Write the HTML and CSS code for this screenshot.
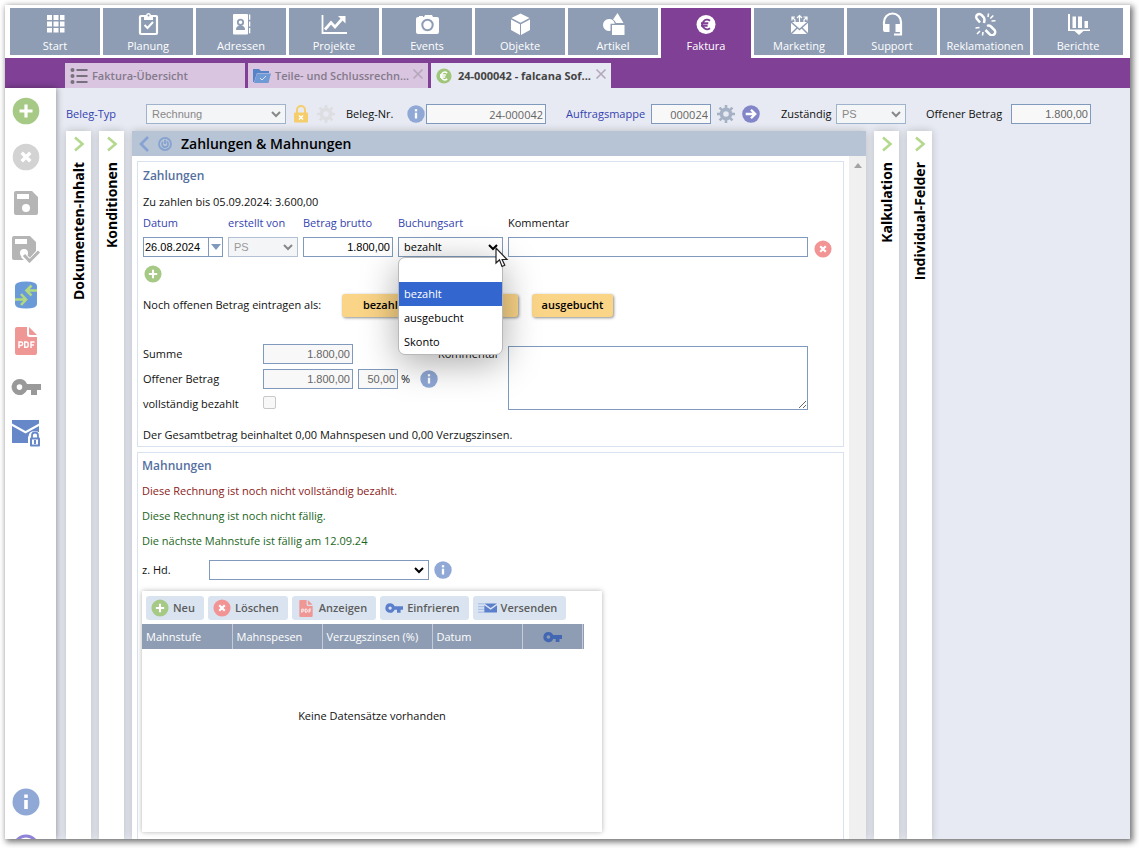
FILE: index.html
```
<!DOCTYPE html>
<html lang="de">
<head>
<meta charset="utf-8">
<title>Faktura</title>
<link rel="stylesheet" href="styles.css">
</head>
<body>
<svg class="symbols" aria-hidden="true">
  <symbol id="plus" viewBox="0 0 28 28"><circle cx="14" cy="14" r="13.3" fill="#a6ca86"/><path d="M14 7.5v13M7.5 14h13" stroke="#fff" stroke-width="3.2"/></symbol>
  <symbol id="cross" viewBox="0 0 28 28"><circle cx="14" cy="14" r="13.3" fill="currentColor"/><path d="M9.7 9.7l8.6 8.6M18.3 9.7l-8.6 8.6" stroke="#fff" stroke-width="3.4"/></symbol>
  <symbol id="info" viewBox="0 0 28 28"><circle cx="14" cy="14" r="13.5" fill="#8fa8d5"/><path d="M14 12v9" stroke="#fff" stroke-width="3.6"/><path d="M14 6.5v3.4" stroke="#fff" stroke-width="3.6"/></symbol>
  <symbol id="key" viewBox="0 0 30 18"><path fill="currentColor" fill-rule="evenodd" d="M8.500 1a8 8 0 1 0 7.500 11h4v5h6v-5h4V6H16a8 8 0 0 0-7.500-5zm0 5.300a2.800 2.800 0 1 1 0 5.600 2.800 2.800 0 0 1 0-5.600z"/></symbol>
  <symbol id="gear" viewBox="0 0 18 18"><circle cx="9" cy="9" r="4.600" fill="none" stroke="currentColor" stroke-width="3.600"/><path stroke="currentColor" stroke-width="2.600" d="M9 0v3.500M9 14.500V18M0 9h3.500M14.500 9H18M2.600 2.600l2.500 2.500M12.900 12.900l2.500 2.500M15.400 2.600l-2.500 2.500M5.100 12.900l-2.500 2.500"/></symbol>
  <symbol id="euro" viewBox="0 0 20 20"><circle cx="10" cy="10" r="9.500" fill="currentColor"/><path d="M14 6.300A4.700 4.700 0 1 0 14 13.700M5 8.800h7.300M5 11.300h6.600" fill="none" stroke="var(--mark)" stroke-width="1.900"/></symbol>
  <symbol id="pdf" viewBox="0 0 22 28"><path fill="#ee9795" d="M2 0h10v7.500q0 2.500 2.500 2.500H22v16a2 2 0 0 1-2 2H2a2 2 0 0 1-2-2V2a2 2 0 0 1 2-2zM14 0l8 8h-6.500Q14 8 14 6.500z"/><path d="M4 21v-6h2a1.700 1.700 0 0 1 0 3.500H4M9.700 20.200v-5.200h1.500a2 2 0 0 1 2 2v1.200a2 2 0 0 1-2 2zM16 21v-6h3.500M16 18h3" fill="none" stroke="#fff" stroke-width="1.400"/></symbol>
  <symbol id="disk" viewBox="0 0 24 24"><path fill="#b5b5b5" fill-rule="evenodd" d="M2 0h16l6 6v16a2 2 0 0 1-2 2H2a2 2 0 0 1-2-2V2a2 2 0 0 1 2-2zM3 3v5h12V3zM12 13a4 4 0 1 0 0 8 4 4 0 0 0 0-8z"/></symbol>
  <symbol id="chev" viewBox="0 0 12 16"><path d="M2 1.500l7.500 6.500L2 14.500" fill="none" stroke="currentColor" stroke-width="2.600"/></symbol>
  <symbol id="close" viewBox="0 0 12 12"><path d="M1.500 1.500l9 9M10.500 1.500l-9 9" stroke="currentColor" stroke-width="1.600"/></symbol>
</svg>

<div class="app">
  <nav class="modules">
    <a class="module" href="#"><svg viewBox="0 0 24 24"><path fill="#fff" d="M4 3h5v5H4zM10.500 3h5v5h-5zM17 3h4.500v5H17zM4 9.500h5v5H4zM10.500 9.500h5v5h-5zM17 9.500h4.500v5H17zM4 16h5v4.500H4zM10.500 16h5v4.500h-5zM17 16h4.500v4.500H17z"/></svg><span>Start</span></a>
    <a class="module" href="#"><svg viewBox="0 0 24 24"><rect x="4" y="4" width="17" height="18" rx="1" fill="none" stroke="#fff" stroke-width="2.200"/><path fill="#fff" d="M8 8V3h2a2.600 2.600 0 0 1 5 0h2v5z"/><circle cx="12.500" cy="3.500" r="1" fill="#8e9db3"/><path d="M8.500 13l3 3 5.500-6" fill="none" stroke="#fff" stroke-width="2"/></svg><span>Planung</span></a>
    <a class="module" href="#"><svg viewBox="0 0 24 24"><rect x="4" y="2" width="15" height="20.500" rx="1" fill="#fff"/><path fill="#fff" d="M20 2.500h1.300v5.300H20zM20 9.500h1.300v5H20zM20 16h1.300v5.300H20z"/><circle cx="11.500" cy="10.300" r="2.700" fill="#fff" stroke="#8e9db3" stroke-width="1.800"/><path fill="#8e9db3" d="M7 18q0-4 3-4.300h3q3 .3 3 4.300z"/></svg><span>Adressen</span></a>
    <a class="module" href="#"><svg class="wide" viewBox="0 0 26 24"><path d="M1.500 3v18H26" fill="none" stroke="#fff" stroke-width="1.800"/><path d="M4 17.500l6-7 4 4.500 8-9" fill="none" stroke="#fff" stroke-width="2.700"/><path fill="#fff" d="M17 4h7.500v7.500z"/></svg><span>Projekte</span></a>
    <a class="module" href="#"><svg viewBox="0 0 24 24"><path fill="#fff" d="M1 7q0-2 2-2h1V4h4v1h1l1-2h7l1 2h4q2 0 2 2v13q0 2-2 2H3q-2 0-2-2z"/><circle cx="12.500" cy="13" r="5.200" fill="none" stroke="#8e9db3" stroke-width="2"/></svg><span>Events</span></a>
    <a class="module" href="#"><svg viewBox="0 0 24 24"><path fill="#fff" d="M12.500 1.500l9 4.500-9 4.700L3.500 6zM3 7.500l9 4.700V23l-9-5zM22 7.500l-9 4.700V23l9-5z"/></svg><span>Objekte</span></a>
    <a class="module" href="#"><svg viewBox="0 0 24 24"><path fill="#fff" d="M16.500 1l6 10H15a6 6 0 0 0-3-3.500z"/><path fill="#fff" d="M8 7a6 6 0 0 1 5.800 4.800H9.500v7A6 6 0 1 1 8 7z"/><path fill="#fff" d="M11 13h12.500v10H11z"/></svg><span>Artikel</span></a>
    <a class="module module-active" href="#"><svg viewBox="0 0 24 24"><use href="#euro" x="2" y="2.500" width="20" height="20"/></svg><span>Faktura</span></a>
    <a class="module" href="#"><svg viewBox="0 0 24 24"><path fill="#fff" d="M4 10h17v12H4z"/><path d="M4 10l8.500 7.500L21 10M4 22l6.500-6.500M21 22l-6.500-6.500" fill="none" stroke="#8e9db3" stroke-width="1.500"/><path d="M12.500 13V4M10 6l2.500-2.500L15 6M8 11V8L5 5M5 8.500V5h3M17 11V8l3-3M16.500 5H20v3.500" fill="none" stroke="#fff" stroke-width="1.200"/></svg><span>Marketing</span></a>
    <a class="module" href="#"><svg viewBox="0 0 24 24"><path d="M4 13v-3a8.500 8.500 0 0 1 17 0v12.500h-7" fill="none" stroke="#fff" stroke-width="2.200"/><path fill="#fff" d="M3 12h6.500v8H5q-2 0-2-2zM15.500 12H22v8h-6.500z"/></svg><span>Support</span></a>
    <a class="module" href="#"><svg viewBox="0 0 24 24"><path d="M11 11l.5-3a5 5 0 0 0-1-3L8.500 3a3 3 0 0 0-4.500 4L7 10.500M12.500 18l4 4a3.200 3.200 0 0 0 5-4L18 14.500q-2-1.500-4-.5" fill="none" stroke="#fff" stroke-width="2.500"/><path d="M15 5l.5-3.500M17.300 6.500l3-3M18.500 9l4-.3M2.500 16l4-.5M4 22l3-3M9.500 23.500l.5-3.500" stroke="#fff" stroke-width="1.600"/></svg><span>Reklamationen</span></a>
    <a class="module" href="#"><svg viewBox="0 0 24 24"><path fill="#fff" d="M2 2h2v15.500h20V19h-6.500L13 23l-4.500-4H2zM6.500 4.500H10V16H6.500zM12 4.500h4V16h-4zM18.500 9H22v7h-3.500z"/></svg><span>Berichte</span></a>
  </nav>

  <div class="tabs">
    <a class="tab" href="#"><svg width="18" height="18" viewBox="0 0 18 18"><g fill="#77717d"><circle cx="2.500" cy="3" r="2"/><circle cx="2.500" cy="9" r="2"/><circle cx="2.500" cy="15" r="2"/><path d="M6.500 2h11v2h-11zM6.500 8h11v2h-11zM6.500 14h11v2h-11z"/></g></svg><span>Faktura-Übersicht</span></a>
    <a class="tab" href="#"><svg width="18" height="18" viewBox="0 0 18 18"><path fill="#5484c8" d="M0 2h6l2 2h8v2H4L1 15H0z"/><path fill="#6f9ad6" d="M4 6.500h14L15.500 16H1z"/><path d="M7 11l2 2 4-4" fill="none" stroke="#dce4f4"/></svg><span>Teile- und Schlussrechn...</span><svg class="tab-close" width="12" height="12"><use href="#close"/></svg></a>
    <a class="tab tab-active" href="#"><svg class="tab-euro" width="16" height="16"><use href="#euro"/></svg><span>24-000042 - falcana Sof...</span><svg class="tab-close" width="12" height="12"><use href="#close"/></svg></a>
  </div>

  <div class="body">
    <aside class="side">
      <button aria-label="Neu"><svg width="28" height="28"><use href="#plus"/></svg></button>
      <button class="c-light" aria-label="Abbrechen"><svg width="28" height="28"><use href="#cross"/></svg></button>
      <button aria-label="Speichern"><svg width="24" height="24"><use href="#disk"/></svg></button>
      <button aria-label="Speichern und schließen"><svg width="28" height="28" viewBox="0 0 28 28"><use href="#disk" x="0" y="1" width="24" height="24"/><path d="M11 20l7 7 10-11" fill="none" stroke="#fff" stroke-width="6"/><path d="M12 20l5.500 6L27 16.500" fill="none" stroke="#b5b5b5" stroke-width="3"/></svg></button>
      <button aria-label="Abgleich"><svg width="24" height="28" viewBox="0 0 24 28"><path fill="#6b9ad8" d="M1 5q0-4.500 11-4.500T23 5v18q0 4.500-11 4.500T1 23z"/><path d="M23 9.500h-9M17.500 4.500l-5 5 5 5M1 18.500h10M7 13l5 5.500-5 5.500" fill="none" stroke="#b2d97f" stroke-width="2.600"/></svg></button>
      <button aria-label="PDF"><svg width="22" height="28"><use href="#pdf"/></svg></button>
      <button class="c-key" aria-label="Einfrieren"><svg width="30" height="18"><use href="#key"/></svg></button>
      <button aria-label="Sicher versenden"><svg width="28" height="28" viewBox="0 0 28 28"><path fill="#6688c9" d="M0 1h27v3.500L13.500 12 0 4.500zM0 7l13.500 7.500L27 7v6h-6l-5 5v6H0z"/><path fill="#fff" d="M16.500 18q0-6 6-6t6 6v10h-12z"/><rect x="18" y="18.500" width="10" height="9" rx="1" fill="#6688c9"/><path d="M20 19v-2.500a3 3 0 0 1 6 0V19" fill="none" stroke="#6688c9" stroke-width="1.800"/><path fill="#fff" d="M20 20.500h6v5h-6z"/><path d="M23 21v4" stroke="#6688c9" stroke-width="2"/></svg></button>
      <div class="side-foot">
        <button aria-label="Info"><svg width="28" height="28"><use href="#info"/></svg></button>
        <button aria-label="Hilfe"><svg width="28" height="28" viewBox="0 0 28 28"><circle cx="14" cy="14" r="12" fill="none" stroke="#8f83d8" stroke-width="3"/></svg></button>
      </div>
    </aside>

    <div class="work">
      <form class="head">
        <label class="blue h-typ" for="typ">Beleg-Typ</label>
        <select id="typ" class="w140 arial" disabled><option>Rechnung</option></select>
        <svg class="h-lock" width="14" height="18" viewBox="0 0 14 18"><path d="M3 8V5a4 4 0 0 1 8 0v3" fill="none" stroke="#f5cd6b" stroke-width="2"/><rect y="7.500" width="14" height="10" rx="1" fill="#f5cd6b"/><path d="M5 10.500l4 4M9 10.500l-4 4" stroke="#fff" stroke-width="1.500"/></svg>
        <svg class="h-gear1" width="18" height="18"><use href="#gear"/></svg>
        <label class="h-nr" for="nr">Beleg-Nr.</label>
        <svg class="h-info" width="18" height="18"><use href="#info"/></svg>
        <input id="nr" class="w120 num" readonly value="24-000042">
        <label class="blue h-mappe" for="mappe">Auftragsmappe</label>
        <input id="mappe" class="w60 num" readonly value="000024">
        <svg class="h-gear2" width="18" height="18"><use href="#gear"/></svg>
        <svg class="h-go" width="18" height="18" viewBox="0 0 17 17"><circle cx="8.500" cy="8.500" r="8.300" fill="#8286c8"/><path d="M3.500 8.500h8M8.500 4.500l4 4-4 4" fill="none" stroke="#fff" stroke-width="2.200"/></svg>
        <label class="h-zust" for="zust">Zuständig</label>
        <select id="zust" class="w70 arial" disabled><option>PS</option></select>
        <label class="h-offen" for="offen">Offener Betrag</label>
        <input id="offen" class="w80 num arial" readonly value="1.800,00">
      </form>

      <div class="panels">
        <section class="strip"><svg width="12" height="16"><use href="#chev"/></svg><h2>Dokumenten-Inhalt</h2></section>
        <section class="strip"><svg width="12" height="16"><use href="#chev"/></svg><h2>Konditionen</h2></section>
        <section class="main">
          <header class="main-head">
            <svg width="10" height="16" viewBox="0 0 10 16"><path d="M9 1L2 8l7 7" fill="none" stroke="#86a2d0" stroke-width="2.600"/></svg>
            <svg width="14" height="14" viewBox="0 0 14 14"><circle cx="7" cy="7" r="6" fill="none" stroke="#86a2d0" stroke-width="1.800"/><path d="M8.500 4.500a3 3 0 1 1-3.500.5M7 3v4" fill="none" stroke="#86a2d0" stroke-width="1.800"/></svg>
            <h1>Zahlungen &amp; Mahnungen</h1>
          </header>
          <div class="main-body">
            <div class="scroll">
              <section class="box pay">
                <h3>Zahlungen</h3>
                <p class="due">Zu zahlen bis 05.09.2024: 3.600,00</p>
                <div class="entries">
                  <label class="blue" for="datum">Datum</label>
                  <label class="blue" for="von">erstellt von</label>
                  <label class="blue" for="brutto">Betrag brutto</label>
                  <label class="blue" for="art">Buchungsart</label>
                  <label for="komm">Kommentar</label>
                  <span></span>
                  <span class="date"><input id="datum" class="arial" value="26.08.2024"><button type="button" aria-label="Kalender"><svg width="10" height="6" viewBox="0 0 10 6"><path fill="#7f9abc" d="M0 0h10L5 6z"/></svg></button></span>
                  <select id="von" class="arial faded" disabled><option>PS</option></select>
                  <input id="brutto" class="num arial" value="1.800,00">
                  <span class="pick">
                    <select id="art"><option></option><option selected>bezahlt</option><option>ausgebucht</option><option>Skonto</option></select>
                    <ul class="menu"><li></li><li class="on">bezahlt</li><li>ausgebucht</li><li>Skonto</li></ul>
                    <svg class="cursor" width="14" height="22" viewBox="0 0 14 22"><path d="M1 1v15l3.500-3.300L7 19.500l2.800-1.200-2.700-5.800H12z" fill="#fff" stroke="#222" stroke-width="1.200"/></svg>
                  </span>
                  <input id="komm" value="">
                  <button type="button" class="icon-btn c-red" aria-label="Zeile löschen"><svg width="18" height="18"><use href="#cross"/></svg></button>
                </div>
                <button type="button" class="icon-btn add" aria-label="Zeile hinzufügen"><svg width="18" height="18"><use href="#plus"/></svg></button>
                <div class="book"><span>Noch offenen Betrag eintragen als:</span>
                  <button type="button">bezahlt</button><button type="button">Skonto</button><button type="button">ausgebucht</button></div>
                <div class="totals">
                  <div class="sums">
                    <div class="row"><label for="summe">Summe</label><input id="summe" class="w90 num arial" readonly value="1.800,00"></div>
                    <div class="row"><label for="rest">Offener Betrag</label><input id="rest" class="w90 num arial" readonly value="1.800,00"><input class="w40 num arial" aria-label="Prozent" readonly value="50,00"><span class="pct">%</span><svg width="18" height="18"><use href="#info"/></svg></div>
                    <div class="row"><label for="voll">vollständig bezahlt</label><input id="voll" type="checkbox" disabled></div>
                  </div>
                  <label class="note" for="notiz">Kommentar</label>
                  <textarea id="notiz"></textarea>
                </div>
                <p class="sumtext">Der Gesamtbetrag beinhaltet 0,00 Mahnspesen und 0,00 Verzugszinsen.</p>
              </section>

              <section class="box dun">
                <h3>Mahnungen</h3>
                <p class="red">Diese Rechnung ist noch nicht vollständig bezahlt.</p>
                <p class="green">Diese Rechnung ist noch nicht fällig.</p>
                <p class="green">Die nächste Mahnstufe ist fällig am 12.09.24</p>
                <div class="row attn"><label for="zhd">z. Hd.</label><select id="zhd"><option></option></select><svg width="18" height="18"><use href="#info"/></svg></div>
                <div class="grid">
                  <div class="tools">
                    <button type="button"><svg width="18" height="18"><use href="#plus"/></svg>Neu</button>
                    <button type="button"><svg class="c-red" width="18" height="18"><use href="#cross"/></svg>Löschen</button>
                    <button type="button"><svg width="18" height="17"><use href="#pdf"/></svg>Anzeigen</button>
                    <button type="button"><svg class="c-blue" width="18" height="12"><use href="#key"/></svg>Einfrieren</button>
                    <button type="button"><svg width="19" height="12" viewBox="0 0 21 12"><path d="M0 1.500h7M0 4.500h7M0 7.500h7M0 10.500h7" stroke="#a9bfe6" stroke-width="1.500"/><path fill="#5b7fcb" d="M7 1h14l-7 5zM7 3l7 5 7-5v8H7z"/></svg>Versenden</button>
                  </div>
                  <table>
                    <thead><tr><th class="c90">Mahnstufe</th><th class="c90">Mahnspesen</th><th class="c110">Verzugszinsen (%)</th><th class="c90">Datum</th><th class="c60"><svg class="c-deep" width="19" height="12"><use href="#key"/></svg></th><th class="c2"></th></tr></thead>
                  </table>
                  <p class="empty">Keine Datensätze vorhanden</p>
                </div>
              </section>
            </div>
            <div class="bar"><svg width="8" height="5" viewBox="0 0 8 5"><path fill="#a3a3a3" d="M4 0l4 5H0z"/></svg></div>
          </div>
        </section>
        <section class="strip"><svg width="12" height="16"><use href="#chev"/></svg><h2>Kalkulation</h2></section>
        <section class="strip"><svg width="12" height="16"><use href="#chev"/></svg><h2>Individual-Felder</h2></section>
      </div>
    </div>
  </div>
</div>
</body>
</html>
```
FILE: styles.css
```
* { box-sizing: border-box; }
body {
  margin: 0;
  padding: 5px 9px 9px 5px;
  height: 100vh;
  background: #fff;
  overflow: hidden;
  font: 11px/16px "Open Sans", "Noto Sans", sans-serif;
  color: #111;
}
.symbols { position: absolute; width: 0; height: 0; }
svg { display: block; flex: none; }
h1, h2, h3, p, ul { margin: 0; padding: 0; }
a { text-decoration: none; }
button { font: inherit; border: 0; padding: 0; background: none; color: inherit; }

.app {
  height: 100%;
  display: flex;
  flex-direction: column;
  background: #fff;
  box-shadow: 2px 2px 6px 1px rgba(0, 0, 0, .55);
  overflow: hidden;
}

.modules {
  display: grid;
  grid-template-columns: repeat(12, minmax(0, 1fr));
  gap: 3px;
  padding: 3px 7px 0 5px;
  height: 53px;
}
.module {
  height: 47px;
  padding-top: 4px;
  display: flex;
  flex-direction: column;
  align-items: center;
  gap: 2px;
  background: #8e9db3;
  color: #fff;
}
.module svg { width: 24px; height: 24px; }
.module svg.wide { width: 26px; }
.module-active { height: 50px; background: #7f4095; --mark: #7f4095; }

.tabs {
  display: flex;
  gap: 3px;
  height: 30px;
  padding: 5px 0 0 60px;
  background: #7f4095;
}
.tab {
  position: relative;
  width: 180px;
  padding-left: 5px;
  display: flex;
  align-items: center;
  gap: 4px;
  background: #d9c5e0;
  color: #847a8b;
  font-weight: 600;
}
.tab-active { background: #e7eaf2; color: #444; gap: 6px; font-weight: 700; }
.tab-euro { color: #a0c67c; --mark: #fff; }
.tab-close { position: absolute; right: 4px; top: 5px; color: #b3a8ba; }

.body { flex: 1; min-height: 0; display: flex; background: #e7eaf2; }
.side {
  width: 51px;
  padding-top: 9px;
  display: flex;
  flex-direction: column;
  gap: 18px;
  background: #fff;
  box-shadow: 1px 0 6px rgba(0, 0, 0, .35);
  overflow: hidden;
}
.side button { height: 28px; width: 42px; display: grid; place-items: center; }
.side-foot { margin-top: auto; height: 51px; display: flex; flex-direction: column; gap: 18px; overflow: hidden; }
.side-foot button { flex: none; }
.c-light { color: #d3d3d3; }
.c-key { color: #999; }
.c-red { color: #f29394; }
.c-blue { color: #5b7fcb; }
.c-deep { color: #4467b4; }

.work { flex: 1; min-width: 0; display: flex; flex-direction: column; }
.blue { color: #3543b0; }
input, select, textarea {
  height: 20px;
  margin: 0;
  padding: 0 2px;
  border: 1px solid #7f9abc;
  border-radius: 0;
  background-color: #fff;
  font: 11px/16px "Open Sans", "Noto Sans", sans-serif;
  color: #000;
  min-width: 0;
  outline: 0;
}
select {
  appearance: none;
  padding: 0 5px;
  background-image: url("data:image/svg+xml,%3Csvg xmlns='http://www.w3.org/2000/svg' width='10' height='7' viewBox='0 0 10 7'%3E%3Cpath d='M1 1l4 4 4-4' fill='none' stroke='%23000' stroke-width='2'/%3E%3C/svg%3E");
  background-repeat: no-repeat;
  background-position: right 4px center;
}
select:disabled {
  opacity: 1;
  color: #888;
  border-color: #9fb3cc;
  background-color: #f4f5f7;
  background-image: url("data:image/svg+xml,%3Csvg xmlns='http://www.w3.org/2000/svg' width='10' height='7' viewBox='0 0 10 7'%3E%3Cpath d='M1 1l4 4 4-4' fill='none' stroke='%23888' stroke-width='2'/%3E%3C/svg%3E");
}
select.faded { border-color: #b3c1d5; color: #999; }
input[readonly] { background: #f8f8f8; color: #666; }
.arial { font-family: "Liberation Sans", Arial, sans-serif; }
.num { text-align: right; }
.w40 { width: 40px; }
.w60 { width: 60px; }
.w70 { width: 70px; }
.w80 { width: 80px; }
.w90 { width: 90px; }
.w120 { width: 120px; }
.w140 { width: 140px; }

.head {
  display: flex;
  align-items: center;
  padding: 16px 0 7px 10px;
  white-space: nowrap;
}
.head > * { flex: none; }
.h-typ { width: 80px; }
.h-lock { margin-left: 8px; }
.h-gear1 { margin-left: 9px; color: #dcdee2; }
.h-nr { width: 61px; margin-left: 11px; }
.h-info { margin-right: 1px; }
.h-mappe { width: 85px; margin-left: 20px; }
.h-gear2 { margin-left: 6px; color: #a5b2c5; }
.h-go { margin-left: 7px; }
.h-zust { width: 55px; margin-left: 21px; }
.h-offen { width: 85px; margin-left: 20px; }

.panels {
  flex: 1;
  min-height: 0;
  display: grid;
  grid-template-columns: 25px 25px minmax(0, 1fr) 25px 25px;
  gap: 8px;
  padding: 0 198px 0 10px;
}
.strip {
  background: #fff;
  box-shadow: 0 0 8px rgba(0, 0, 0, .2);
  display: flex;
  flex-direction: column;
  align-items: center;
  gap: 10px;
  padding-top: 5px;
  color: #b5d88f;
}
.strip h2 {
  writing-mode: vertical-rl;
  transform: rotate(180deg);
  font-size: 14px;
  line-height: 22px;
  color: #000;
}
.main { display: flex; flex-direction: column; min-width: 0; min-height: 0; background: #fff; box-shadow: 0 0 8px rgba(0, 0, 0, .2); }
.main-head { display: flex; align-items: center; gap: 9px; height: 25px; padding-left: 7px; background: #b7c4d6; }
h1 { font-size: 14px; line-height: 20px; font-weight: 600; color: #000; }
.main-body { flex: 1; min-height: 0; display: flex; }
.scroll { flex: 1; min-width: 0; overflow: hidden; padding: 5px 5px 0; }
.bar { width: 17px; background: #f0f0f0; display: flex; justify-content: center; padding-top: 7px; }

.box { border: 1px solid #d9e3ef; }
.box h3 { font-size: 12px; line-height: 16px; font-weight: 600; color: #55709f; }
.pay { padding: 6px 5px 3px; margin-bottom: 5px; }
.due { margin-top: 10px; }
.entries {
  display: grid;
  grid-template-columns: 80px 70px 90px 105px minmax(0, 300px) 20px;
  gap: 6px 5px;
  margin-top: 5px;
}
.entries > input, .entries > select { width: 100%; }
.date { display: flex; }
.date input { flex: 1; padding: 0 1px; }
.date button { width: 14px; border: 1px solid #7f9abc; border-left: 0; display: grid; place-items: center; }
.icon-btn { display: grid; place-items: center; height: 24px; width: 20px; }
.entries .icon-btn { margin-bottom: -4px; }
.pick { position: relative; height: 20px; }
.pick select { width: 100%; display: block; }
.menu {
  position: absolute;
  z-index: 2;
  left: 0;
  top: 20px;
  width: 105px;
  height: 98px;
  border: 1px solid #b8b8b8;
  border-radius: 7px;
  background: #fff;
  box-shadow: 0 8px 36px rgba(0, 0, 0, .34);
  list-style: none;
  overflow: hidden;
}
.menu li { height: 24px; padding-left: 5px; line-height: 24px; color: #000; }
.menu .on { background: #3366cf; color: #fff; }
.cursor { position: absolute; z-index: 3; left: 97px; top: 10px; }
.add { margin-top: 5px; }
.book { display: flex; align-items: center; gap: 14px; height: 22px; margin-top: 8px; }
.book span { width: 185px; white-space: nowrap; }
.book button {
  min-width: 81px;
  height: 23px;
  border-radius: 3px;
  background: #fad487;
  font-weight: 600;
  color: #000;
  box-shadow: 1px 1px 3px rgba(0, 0, 0, .45);
}
.totals { display: grid; grid-template-columns: 300px 60px minmax(0, 300px); margin-top: 28px; }
.sums { display: grid; gap: 5px; }
.row { display: flex; align-items: center; gap: 5px; height: 20px; }
.sums label { width: 115px; }
.pct { margin-left: -2px; width: 14px; }
.note { padding-top: 2px; text-align: right; margin: 0 5px 0 -5px; }
.totals textarea { width: 100%; height: 64px; margin: 2px 0 0 5px; resize: both; }
input[type="checkbox"] { appearance: none; width: 13px; height: 13px; margin-bottom: 4px; border: 1px solid #c8c8c8; border-radius: 2px; background: #f8f8f8; }
.sumtext { margin-top: 13px; }

.dun { height: 100%; padding: 5px 4px; }
.dun p { margin-top: 9px; }
.dun .red { color: #8b1a1a; }
.dun .green { color: #1c661c; }
.attn { margin-top: 11px; }
.attn label { width: 62px; }
.attn select { width: 220px; }
.grid { width: 460px; height: 241px; margin-top: 11px; background: #fff; box-shadow: 0 0 5px rgba(0, 0, 0, .3); }
.tools { display: flex; gap: 4px; padding: 5px 4px 4px; }
.tools button {
  display: flex;
  align-items: center;
  gap: 4px;
  height: 24px;
  padding: 0 9px 0 5px;
  border-radius: 3px;
  background: #dae4f0;
  font-weight: 600;
  color: #5d5d5d;
}
table { border-collapse: collapse; table-layout: fixed; background: #8e9db3; color: #fff; width: 442px; }
th { height: 25px; padding: 0 4px; text-align: left; font-weight: 400; border-right: 1px solid #c3ccd8; white-space: nowrap; }
th svg { margin: 0 auto; }
th.c2 { padding: 0; border: 0; }
.c90 { width: 90px; }
.c110 { width: 110px; }
.c60 { width: 60px; }
.c2 { width: 2px; }
.grid .empty { margin-top: 59px; text-align: center; }
```
